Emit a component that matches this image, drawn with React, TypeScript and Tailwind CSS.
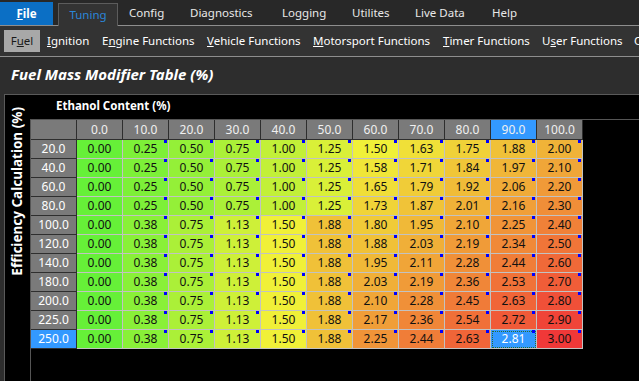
import React from "react";

const cols = ["0.0", "10.0", "20.0", "30.0", "40.0", "50.0", "60.0", "70.0", "80.0", "90.0", "100.0"];

const rows: { label: string; vals: string[] }[] = [
  { label: "20.0", vals: ["0.00", "0.25", "0.50", "0.75", "1.00", "1.25", "1.50", "1.63", "1.75", "1.88", "2.00"] },
  { label: "40.0", vals: ["0.00", "0.25", "0.50", "0.75", "1.00", "1.25", "1.58", "1.71", "1.84", "1.97", "2.10"] },
  { label: "60.0", vals: ["0.00", "0.25", "0.50", "0.75", "1.00", "1.25", "1.65", "1.79", "1.92", "2.06", "2.20"] },
  { label: "80.0", vals: ["0.00", "0.25", "0.50", "0.75", "1.00", "1.25", "1.73", "1.87", "2.01", "2.16", "2.30"] },
  { label: "100.0", vals: ["0.00", "0.38", "0.75", "1.13", "1.50", "1.88", "1.80", "1.95", "2.10", "2.25", "2.40"] },
  { label: "120.0", vals: ["0.00", "0.38", "0.75", "1.13", "1.50", "1.88", "1.88", "2.03", "2.19", "2.34", "2.50"] },
  { label: "140.0", vals: ["0.00", "0.38", "0.75", "1.13", "1.50", "1.88", "1.95", "2.11", "2.28", "2.44", "2.60"] },
  { label: "180.0", vals: ["0.00", "0.38", "0.75", "1.13", "1.50", "1.88", "2.03", "2.19", "2.36", "2.53", "2.70"] },
  { label: "200.0", vals: ["0.00", "0.38", "0.75", "1.13", "1.50", "1.88", "2.10", "2.28", "2.45", "2.63", "2.80"] },
  { label: "225.0", vals: ["0.00", "0.38", "0.75", "1.13", "1.50", "1.88", "2.17", "2.36", "2.54", "2.72", "2.90"] },
  { label: "250.0", vals: ["0.00", "0.38", "0.75", "1.13", "1.50", "1.88", "2.25", "2.44", "2.63", "2.81", "3.00"] },
];

// green (0) -> yellow (1.5) -> red (3)
const cellColor = (v: number) => {
  const h = v <= 1.5 ? 105 - 30 * v : 60 - 40 * (v - 1.5);
  return `hsl(${h} 86% 58%)`;
};

const App = () => {
  return (
    <div
      className="w-[639px] h-[381px] overflow-hidden bg-[#2d2d2d] flex flex-col text-[11.5px] text-[#e8e8e8]"
      style={{ fontFamily: '"Noto Sans", "Open Sans", sans-serif' }}
    >
      {/* Top menu */}
      <div className="h-[26px] shrink-0 bg-[#282828] border-b border-[#8e8e8e] flex items-stretch whitespace-nowrap">
        <div className="shrink-0 mt-[2px] w-[53px] bg-[#0b6fc5] flex items-center justify-center font-bold text-white">
          <span>
            <u>F</u>ile
          </span>
        </div>
        <div className="shrink-0 relative -mb-px ml-[5px] mt-[3px] w-[60px] bg-[#333333] border-t border-l border-r border-[#5c5c5c] flex items-center justify-center text-[#2b86d8]">
          Tuning
        </div>
        <div className="shrink-0 flex items-center ml-[11px] w-[61px]">Config</div>
        <div className="shrink-0 flex items-center w-[92px]">Diagnostics</div>
        <div className="shrink-0 flex items-center w-[70px]">Logging</div>
        <div className="shrink-0 flex items-center w-[63px]">Utilites</div>
        <div className="shrink-0 flex items-center w-[77px]">Live Data</div>
        <div className="shrink-0 flex items-center">Help</div>
      </div>

      {/* Sub menu */}
      <div className="h-[31px] shrink-0 bg-[#333333] border-b border-[#8e8e8e] flex items-center whitespace-nowrap overflow-hidden text-white">
        <div className="shrink-0 ml-[4px] w-[36px] h-[22px] bg-[#a8a8a8] text-[#1a1a1a] flex items-center justify-center">
          <span>
            F<u>u</u>el
          </span>
        </div>
        <div className="shrink-0 ml-[7px] w-[55px]">
          <u>I</u>gnition
        </div>
        <div className="shrink-0 w-[105px]">
          E<u>n</u>gine Functions
        </div>
        <div className="shrink-0 w-[106px]">
          <u>V</u>ehicle Functions
        </div>
        <div className="shrink-0 w-[130px]">
          <u>M</u>otorsport Functions
        </div>
        <div className="shrink-0 w-[99px]">
          <u>T</u>imer Functions
        </div>
        <div className="shrink-0 w-[92px]">
          U<u>s</u>er Functions
        </div>
        <div className="shrink-0">C</div>
      </div>

      {/* Title */}
      <div className="h-[37px] shrink-0 flex items-center pl-[11px] pb-[2px]">
        <h1 className="text-[15px] font-bold italic text-white">Fuel Mass Modifier Table (%)</h1>
      </div>

      {/* Table panel */}
      <div className="flex-1 ml-[4px] bg-black border-t border-l border-[#5a5a5a] flex min-h-0">
        <div className="w-[25px] shrink-0 flex items-start justify-center pt-[12px]">
          <span className="[writing-mode:vertical-rl] rotate-180 font-bold text-white text-[13.5px] whitespace-nowrap">
            Efficiency Calculation (%)
          </span>
        </div>

        <div className="flex-1 flex flex-col">
          <div className="h-[24px] shrink-0 flex items-center pl-[26px] pb-[3px] font-bold text-white text-[11.5px]">
            Ethanol Content (%)
          </div>

          <div className="flex-1 border-t border-l border-[#555555] text-[12px]">
            {/* Header row */}
            <div className="flex h-[20px]">
              <div className="w-[46px] bg-[#7a7a7a] border-r border-b border-[#2e2e2e]" />
              {cols.map((c) => (
                <div
                  key={c}
                  className={`w-[46px] flex items-center justify-center border-r border-b border-[#2e2e2e] text-[#f0f0f0] ${
                    c === "90.0" ? "bg-[#3399ff]" : "bg-[#7a7a7a]"
                  }`}
                >
                  {c}
                </div>
              ))}
            </div>

            {rows.map((r) => (
              <div key={r.label} className="flex h-[19px]">
                <div
                  className={`w-[46px] flex items-center justify-center border-r border-b border-[#2e2e2e] text-white ${
                    r.label === "250.0" ? "bg-[#3399ff]" : "bg-[#7a7a7a]"
                  }`}
                >
                  {r.label}
                </div>
                {r.vals.map((v, i) => {
                  const selected = r.label === "250.0" && i === 9;
                  return (
                    <div
                      key={i}
                      className={`relative w-[46px] flex items-center justify-center border-r border-b border-[#c2c2c2] ${
                        selected
                          ? "text-white outline-1 outline-dotted outline-[#2d6a2d] -outline-offset-2"
                          : "text-[#111111]"
                      }`}
                      style={{ backgroundColor: selected ? "#3399ff" : cellColor(parseFloat(v)) }}
                    >
                      {v}
                      {i > 0 && (
                        <span className="absolute top-0 right-[1px] w-[3px] h-[3px] bg-[#0000ff]" />
                      )}
                    </div>
                  );
                })}
              </div>
            ))}
          </div>
        </div>
      </div>
    </div>
  );
};

export default App;
